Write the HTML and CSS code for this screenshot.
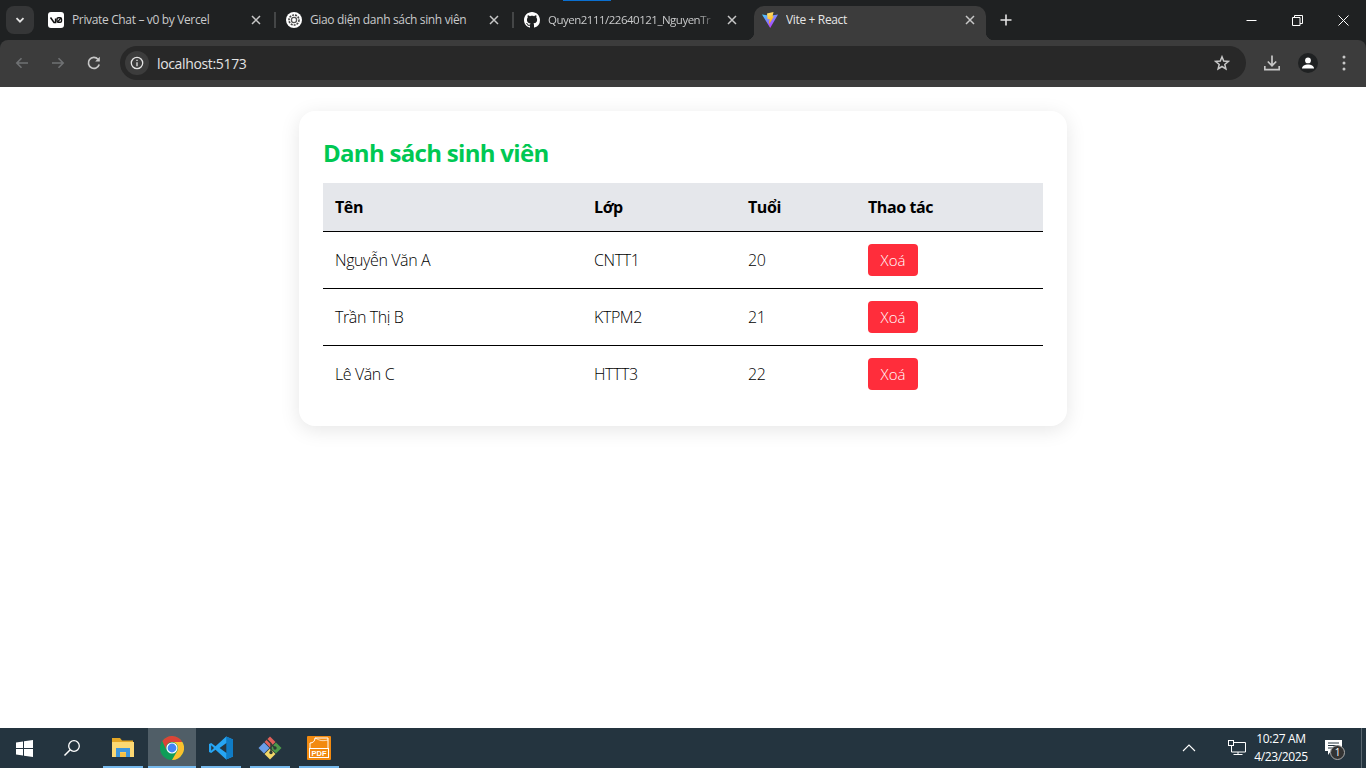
FILE: index.html
```html
<!DOCTYPE html>
<html>
<head>
<meta charset="utf-8"/>
<title>Vite + React</title>
<link rel="stylesheet" href="styles.css">
</head>
<body>

<div class="browser">
  <div class="titlebar">
    <div class="loading-line"></div>
    <button class="tab-search">
      <svg width="12" height="12" viewBox="0 0 12 12"><path d="M2.500 4.200 6 7.700l3.500-3.500" fill="none" stroke="#e3e3e3" stroke-width="1.800"/></svg>
    </button>
    <div class="tabs">
      <div class="tab">
        <svg class="favicon" viewBox="0 0 16 16"><rect width="16" height="16" rx="3" fill="#fff"/><path d="M2.500 5.500 6 10.500H7.600V6.500" fill="none" stroke="#111" stroke-width="1.500"/><rect x="9" y="5.700" width="4.500" height="4.600" rx="1.400" fill="none" stroke="#111" stroke-width="1.400"/><path d="M9.500 10 13 6" stroke="#111" stroke-width="1.200"/></svg>
        <span class="tab-title">Private Chat – v0 by Vercel</span>
        <svg class="tab-close" viewBox="0 0 16 16"><path d="M4 4l8 8M12 4l-8 8" stroke="#c7c7c7" stroke-width="1.500"/></svg>
      </div>
      <div class="tab-sep"></div>
      <div class="tab">
        <svg class="favicon" viewBox="0 0 16 16"><circle cx="8" cy="8" r="8" fill="#fff"/><circle cx="8" cy="8" r="5" fill="none" stroke="#444" stroke-width="1.600" stroke-dasharray="2 1"/><circle cx="8" cy="8" r="2.600" fill="none" stroke="#555" stroke-width="1.300"/></svg>
        <span class="tab-title">Giao diện danh sách sinh viên</span>
        <svg class="tab-close" viewBox="0 0 16 16"><path d="M4 4l8 8M12 4l-8 8" stroke="#c7c7c7" stroke-width="1.500"/></svg>
      </div>
      <div class="tab-sep"></div>
      <div class="tab">
        <svg class="favicon" viewBox="0 0 16 16"><path fill="#fff" d="M8 0C3.580 0 0 3.580 0 8c0 3.540 2.290 6.530 5.470 7.590.4.070.55-.17.55-.38 0-.19-.01-.82-.01-1.490-2.010.37-2.530-.49-2.690-.94-.09-.23-.48-.94-.82-1.130-.28-.15-.68-.52-.01-.53.63-.01 1.080.58 1.230.82.72 1.210 1.870.87 2.330.66.070-.52.28-.87.51-1.070-1.780-.2-3.640-.89-3.640-3.950 0-.87.31-1.590.82-2.150-.08-.2-.36-1.020.08-2.120 0 0 .67-.21 2.200.82.64-.18 1.320-.27 2-.27s1.360.09 2 .27c1.530-1.040 2.200-.82 2.200-.82.44 1.100.16 1.920.08 2.120.51.56.82 1.270.82 2.150 0 3.070-1.870 3.750-3.650 3.950.29.25.54.73.54 1.480 0 1.070-.01 1.930-.01 2.200 0 .21.15.46.55.38A8.010 8.010 0 0 0 16 8c0-4.420-3.580-8-8-8Z"/></svg>
        <span class="tab-title tab-fade">Quyen2111/22640121_NguyenTr</span>
        <svg class="tab-close" viewBox="0 0 16 16"><path d="M4 4l8 8M12 4l-8 8" stroke="#c7c7c7" stroke-width="1.500"/></svg>
      </div>
      <div class="tab-sep tab-sep-hidden"></div>
      <div class="tab tab-active">
        <svg class="favicon" viewBox="0 0 16 16"><defs><linearGradient id="viteA" x1="0" y1="0" x2="0.600" y2="1"><stop offset="0" stop-color="#41d1ff"/><stop offset="1" stop-color="#bd34fe"/></linearGradient><linearGradient id="viteB" x1="0" y1="0" x2="0.300" y2="1"><stop offset="0" stop-color="#ffea83"/><stop offset="1" stop-color="#ffa800"/></linearGradient></defs><path d="M0 2.400 8 3.800 16 2.400 8.200 16Z" fill="url(#viteA)"/><path d="M5 1.500 11.500 0 10.500 4.500 12 4.200 7 12.500 7.500 7 5.600 7.300Z" fill="url(#viteB)"/></svg>
        <span class="tab-title">Vite + React</span>
        <svg class="tab-close" viewBox="0 0 16 16"><path d="M4 4l8 8M12 4l-8 8" stroke="#c7c7c7" stroke-width="1.500"/></svg>
      </div>
    </div>
    <button class="new-tab">
      <svg width="12" height="12" viewBox="0 0 12 12"><path d="M6 .5v11M.5 6h11" stroke="#e3e3e3" stroke-width="1.600"/></svg>
    </button>
    <div class="window-controls">
      <button><svg width="11" height="11" viewBox="0 0 11 11"><path d="M.5 5.500h10" stroke="#fff"/></svg></button>
      <button><svg width="11" height="11" viewBox="0 0 11 11"><path d="M.5 2.500h7.500v8h-7.500zM2.500 2.500v-2h8v8h-2.500" fill="none" stroke="#fff"/></svg></button>
      <button><svg width="11" height="11" viewBox="0 0 11 11"><path d="M.5.5l10 10M10.500.5l-10 10" stroke="#fff"/></svg></button>
    </div>
  </div>

  <div class="toolbar">
    <button class="tool"><svg width="16" height="16" viewBox="0 0 16 16"><path d="M14 8H3M7.500 3.200 2.800 8l4.700 4.800" fill="none" stroke="#6f7173" stroke-width="1.600"/></svg></button>
    <button class="tool"><svg width="16" height="16" viewBox="0 0 16 16"><path d="M2 8h11M8.500 3.200 13.200 8l-4.700 4.800" fill="none" stroke="#6f7173" stroke-width="1.600"/></svg></button>
    <button class="tool"><svg width="16" height="16" viewBox="0 0 16 16"><path d="M13.200 9.500A5.500 5.500 0 1 1 12 4.200" fill="none" stroke="#c7c7c7" stroke-width="1.700"/><path d="M13.800 1.800v4.600H9.200Z" fill="#c7c7c7"/></svg></button>
    <div class="omnibox">
      <span class="site-info"><svg width="14" height="14" viewBox="0 0 14 14"><circle cx="7" cy="7" r="5.700" fill="none" stroke="#e3e3e3" stroke-width="1.300"/><path d="M7 6.200v4M7 3.700v1.400" stroke="#e3e3e3" stroke-width="1.300"/></svg></span>
      <span class="url">localhost:5173</span>
      <svg class="star" width="16" height="16" viewBox="0 0 16 16"><path d="M8 1.800 9.700 6l4.600.4-3.500 3 1.100 4.500L8 11.500l-3.900 2.400 1.100-4.500-3.500-3L6.300 6Z" fill="none" stroke="#c7c7c7" stroke-width="1.500"/></svg>
    </div>
    <button class="tool tool-first"><svg width="16" height="16" viewBox="0 0 16 16"><path d="M8 .5v10M3.800 6.500 8 10.700l4.200-4.200M.8 11v3.700h14.400V11" fill="none" stroke="#c7c7c7" stroke-width="1.700"/></svg></button>
    <button class="tool"><span class="avatar"><svg width="20" height="20" viewBox="0 0 20 20"><circle cx="10" cy="7.400" r="2.900" fill="#fff"/><path d="M4 15.500c0-2.600 3.200-3.900 6-3.900s6 1.300 6 3.900Z" fill="#fff"/></svg></span></button>
    <button class="tool"><svg width="16" height="16" viewBox="0 0 16 16"><circle cx="8" cy="2" r="1.500" fill="#c7c7c7"/><circle cx="8" cy="8" r="1.500" fill="#c7c7c7"/><circle cx="8" cy="14" r="1.500" fill="#c7c7c7"/></svg></button>
  </div>
</div>

<main class="page">
  <section class="card">
    <h2>Danh sách sinh viên</h2>
    <table>
      <thead>
        <tr><th class="col-name">Tên</th><th class="col-class">Lớp</th><th class="col-age">Tuổi</th><th>Thao tác</th></tr>
      </thead>
      <tbody>
        <tr><td>Nguyễn Văn A</td><td>CNTT1</td><td>20</td><td><button class="btn-delete">Xoá</button></td></tr>
        <tr><td>Trần Thị B</td><td>KTPM2</td><td>21</td><td><button class="btn-delete">Xoá</button></td></tr>
        <tr><td>Lê Văn C</td><td>HTTT3</td><td>22</td><td><button class="btn-delete">Xoá</button></td></tr>
      </tbody>
    </table>
  </section>
</main>

<footer class="taskbar">
  <div class="task-start"><svg width="17" height="17" viewBox="0 0 17 17"><path d="M0 2.500 7 1.500v6.500H0ZM8 1.300 17 0v8H8ZM0 9h7v6.500l-7-1ZM8 9h9v8l-9-1.300Z" fill="#fff"/></svg></div>
  <div class="task-search"><svg width="18" height="18" viewBox="0 0 18 18"><circle cx="11" cy="7" r="5.300" fill="none" stroke="#fff" stroke-width="1.300"/><path d="M7.200 10.800 1.500 16.500" stroke="#fff" stroke-width="1.500"/></svg></div>
  <div class="task-apps">
    <div class="app">
      <svg width="22" height="20" viewBox="0 0 22 20"><path d="M0 0h8l2 2.500h11V5H0Z" fill="#e5a726"/><rect y="4" width="22" height="15" fill="#fcd873"/><path d="M4 10h14v9h-4v-5H8v5H4Z" fill="#3f96dc"/><rect x="8" y="14.500" width="6" height="4.500" fill="#f5c044"/></svg>
    </div>
    <div class="app app-active">
      <svg width="24" height="24" viewBox="0 0 24 24"><circle cx="12" cy="12" r="12" fill="#0f9d58"/><path d="M2.300 4.900A12 12 0 0 1 22.400 6H12a6 6 0 0 0-5.200 9Z" fill="#db4437"/><path d="M22.400 6A12 12 0 0 1 12 24l5.200-9a6 6 0 0 0-5.200-9Z" fill="#fbc02d"/><circle cx="12" cy="12" r="5.600" fill="#fff"/><circle cx="12" cy="12" r="4.400" fill="#4285f4"/></svg>
    </div>
    <div class="app">
      <svg width="24" height="24" viewBox="0 0 24 24"><path d="M17.200 .5 24 3.600v16.800l-6.800 3.100L6.500 13.800 2.200 17 0 15.900V8.100L2.200 7l4.300 3.200Z" fill="#26a5f3"/><path d="M17.200 .5 24 3.600v16.800l-6.800 3.100Z" fill="#0f7cc6"/><path d="M17.400 6.900 10.600 12l6.800 5.100Z" fill="#243642"/><path d="M2.200 9.300v5.400L5 12Z" fill="#243642"/></svg>
    </div>
    <div class="app">
      <svg width="24" height="24" viewBox="0 0 24 24"><path d="M12 .5 17.500 6 12 11.500 6.500 6Z" fill="#e0605a"/><path d="M6 6.500 11.500 12 6 17.500.5 12Z" fill="#6a9ee8"/><path d="M18 6.500 23.500 12 18 17.500 12.500 12Z" fill="#4e9a4a"/><path d="M12 12.500 17.500 18 12 23.500 6.500 18Z" fill="#f2d769"/><path d="M9 3.500 13 7.500V16" fill="none" stroke="#2c3a36" stroke-width="1.400"/><path d="M13 8 17 12" stroke="#2c3a36" stroke-width="1.400"/><circle cx="13" cy="16.500" r="1.700" fill="#2c3a36"/><circle cx="17" cy="12" r="1.700" fill="#2c3a36"/></svg>
    </div>
    <div class="app">
      <svg width="24" height="24" viewBox="0 0 24 24"><rect width="24" height="24" rx="1" fill="#f28a10"/><path d="M3 12V7C6 7 8 5 8 2H21V12" fill="none" stroke="#fff"/><path d="M8 2C11 3 13 6 21 4" fill="none" stroke="#fff" stroke-width=".7"/><rect x="2.500" y="12.500" width="19" height="9" fill="none" stroke="#fff"/><text x="12" y="20.300" class="pdf-text">PDF</text></svg>
    </div>
  </div>
  <div class="tray">
    <svg class="tray-chevron" width="14" height="8" viewBox="0 0 14 8"><path d="M1 7l6-6 6 6" fill="none" stroke="#fff" stroke-width="1.100"/></svg>
    <svg class="tray-net" width="18" height="16" viewBox="0 0 18 16"><path d="M3.500 2.500h14v9.500H3.500zM10 12v2.500M5.500 14.500h9" fill="none" stroke="#fff"/><rect x=".5" y=".5" width="5" height="5" fill="#24343f" stroke="#fff"/></svg>
    <div class="clock"><span>10:27 AM</span><span>4/23/2025</span></div>
    <div class="notify">
      <svg width="17" height="15" viewBox="0 0 17 15"><path d="M0 0h17v11H6l-3 4v-4H0Z" fill="#fff"/><path d="M3 3h11M3 5.500h11M3 8h8" stroke="#24343f"/></svg>
      <span class="notify-badge">1</span>
    </div>
    <div class="show-desktop"></div>
  </div>
</footer>

</body>
</html>
```

FILE: styles.css
```css
html, body {
   height: 100%;
}

body {
   margin: 0;
   display: flex;
   flex-direction: column;
   height: 768px;
   overflow: hidden;
   background-color: white;
   font-family: 'Open Sans', 'Noto Sans', sans-serif;
}

button {
   border: none;
   background: none;
   padding: 0;
   font: inherit;
   display: flex;
   align-items: center;
   justify-content: center;
}

/* browser chrome */

.browser {
   background-color: #1f2122;
}

.titlebar {
   position: relative;
   display: flex;
   height: 40px;
}

.loading-line {
   position: absolute;
   left: 563px;
   top: 0;
   width: 48px;
   height: 1px;
   background-color: #0a6fd0;
}

.tab-search {
   width: 28px;
   height: 28px;
   margin: 6px 6px 0 6px;
   border-radius: 8px;
   background-color: #353637;
}

.tabs {
   display: flex;
   padding-top: 6px;
}

.tab {
   position: relative;
   display: flex;
   align-items: flex-start;
   width: 232px;
   height: 34px;
   padding-left: 8px;
   box-sizing: border-box;
   color: #c9cacb;
   font-size: 12px;
   letter-spacing: -0.35px;
}

.tab-sep {
   width: 2px;
   height: 16px;
   margin: 6px 2px 0 2px;
   background-color: #444647;
}

.tab-sep-hidden {
   background-color: transparent;
}

.tab-active {
   background-color: #3c3c3c;
   border-radius: 10px 10px 0 0;
   color: #e6e6e6;
}

.tab-active::before,
.tab-active::after {
   content: "";
   position: absolute;
   bottom: 0;
   width: 8px;
   height: 8px;
}

.tab-active::before {
   left: -8px;
   background: radial-gradient(circle at 0 0, transparent 8px, #3c3c3c 8.500px);
}

.tab-active::after {
   right: -8px;
   background: radial-gradient(circle at 100% 0, transparent 8px, #3c3c3c 8.500px);
}

.favicon {
   width: 16px;
   height: 16px;
   margin-top: 6px;
   flex: none;
}

.tab-title {
   width: 168px;
   margin-left: 8px;
   margin-top: 5px;
   line-height: 18px;
   white-space: nowrap;
   overflow: hidden;
}

.tab-fade {
   font-size: 11.500px;
   letter-spacing: -0.500px;
   -webkit-mask-image: linear-gradient(to right, black 150px, transparent 168px);
   mask-image: linear-gradient(to right, black 150px, transparent 168px);
}

.tab-close {
   width: 16px;
   height: 16px;
   margin-left: 8px;
   margin-top: 6px;
   flex: none;
}

.new-tab {
   width: 28px;
   height: 28px;
   margin: 6px 0 0 6px;
}

.window-controls {
   display: flex;
   margin-left: auto;
}

.window-controls button {
   width: 46px;
   height: 40px;
}

.toolbar {
   display: flex;
   align-items: center;
   height: 47px;
   padding: 0 4px 1px 4px;
   box-sizing: border-box;
   background-color: #3c3c3c;
   border-radius: 8px 8px 0 0;
}

.tool {
   width: 36px;
   height: 36px;
   flex: none;
}

.omnibox {
   display: flex;
   align-items: center;
   height: 34px;
   width: 1126px;
   margin-left: 8px;
   box-sizing: border-box;
   padding: 0 16px 0 5px;
   border-radius: 17px;
   background-color: #282828;
   color: #e3e3e3;
   font-size: 14px;
   letter-spacing: -0.35px;
}

.site-info {
   display: flex;
   align-items: center;
   justify-content: center;
   width: 24px;
   height: 24px;
   border-radius: 50%;
   background-color: #3c3c3c;
}

.url {
   margin-left: 8px;
}

.star {
   margin-left: auto;
}

.tool-first {
   margin-left: 8px;
}

.avatar {
   display: flex;
   width: 20px;
   height: 20px;
   border-radius: 50%;
   background-color: #1f2122;
}

/* page */

.page {
   flex: 1;
   display: flex;
   justify-content: center;
   align-items: flex-start;
   padding-top: 24px;
   background-color: white;
}

.card {
   width: 768px;
   box-sizing: border-box;
   padding: 24px;
   border-radius: 16px;
   background-color: white;
   box-shadow: 0 4px 20px rgba(0, 0, 0, 0.1);
}

h2 {
   margin: 0 0 14px 0;
   padding-top: 2px;
   font-size: 24px;
   line-height: 32px;
   font-weight: bold;
   letter-spacing: -0.7px;
   color: #00c853;
}

table {
   width: 720px;
   table-layout: fixed;
   border-collapse: collapse;
   font-size: 16px;
   letter-spacing: -0.4px;
   color: black;
}

th {
   height: 48px;
   padding: 0 12px;
   text-align: left;
   font-weight: bold;
   background-color: #e5e7eb;
   border-bottom: 1px solid black;
}

td {
   height: 56px;
   padding: 0 12px;
   font-weight: 350;
   border-bottom: 1px solid black;
}

tbody tr:last-child td {
   border-bottom: none;
}

.col-name {
   width: 235px;
}

.col-class {
   width: 130px;
}

.col-age {
   width: 96px;
}

.btn-delete {
   width: 50px;
   height: 32px;
   border-radius: 4px;
   background-color: #ff2d3b;
   color: white;
   font-size: 15px;
   font-weight: 300;
   letter-spacing: 0;
}

/* windows taskbar */

.taskbar {
   display: flex;
   align-items: center;
   height: 40px;
   flex: none;
   background-color: #24343f;
   color: white;
}

.task-start,
.task-search {
   display: flex;
   align-items: center;
   justify-content: center;
   width: 48px;
   height: 40px;
}

.task-search {
   margin-right: 3px;
}

.task-apps {
   display: flex;
   gap: 1px;
}

.app {
   display: flex;
   align-items: center;
   justify-content: center;
   width: 48px;
   height: 40px;
   box-sizing: border-box;
   padding-bottom: 1px;
   background: linear-gradient(#76b9ed, #76b9ed) bottom center / 40px 2px no-repeat;
}

.app-active {
   background: linear-gradient(#76b9ed, #76b9ed) bottom center / 48px 2px no-repeat, #505e67;
}

.pdf-text {
   font-family: 'Liberation Sans', sans-serif;
   font-size: 7.500px;
   font-weight: bold;
   fill: #fff;
   text-anchor: middle;
}

.tray {
   display: flex;
   align-items: center;
   margin-left: auto;
   height: 40px;
}

.tray-net {
   margin-left: 32px;
}

.clock {
   display: flex;
   flex-direction: column;
   align-items: center;
   width: 70px;
   font-size: 12px;
   line-height: 18px;
   letter-spacing: -0.35px;
}

.notify {
   position: relative;
   display: flex;
   width: 17px;
   margin-left: 9px;
   margin-top: -2px;
}

.notify-badge {
   position: absolute;
   left: 5px;
   top: 5px;
   width: 13px;
   height: 13px;
   line-height: 13px;
   border-radius: 50%;
   border: 1px solid #aaa;
   background-color: #333;
   text-align: center;
   font-size: 10px;
}

.show-desktop {
   width: 1px;
   height: 40px;
   margin-left: 19px;
   margin-right: 4px;
   background-color: #5a6770;
}
```
